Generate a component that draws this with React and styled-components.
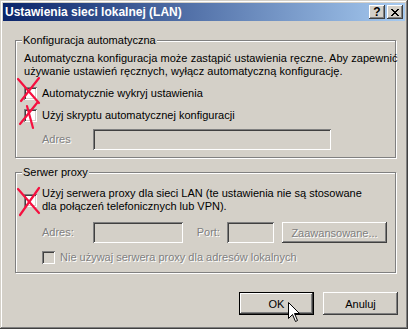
import React from 'react'
import styled, { createGlobalStyle } from 'styled-components'

const GlobalStyle = createGlobalStyle`
  html, body {
    margin: 0;
    padding: 0;
    background: #d4d0c8;
  }
  body {
    font-family: "Liberation Sans", Arial, sans-serif;
    font-size: 11px;
    color: #000;
  }
`

const raised = `
  box-shadow: inset -1px -1px #404040, inset 1px 1px #ffffff,
    inset -2px -2px #808080, inset 2px 2px #d4d0c8;
`

const sunken = `
  box-shadow: inset 1px 1px #808080, inset -1px -1px #ffffff,
    inset 2px 2px #404040, inset -2px -2px #d4d0c8;
`

const CLOSE_PIXELS = [
  'XX....XX',
  '.XX..XX.',
  '..XXXX..',
  '...XX...',
  '..XXXX..',
  '.XX..XX.',
  'XX....XX',
]

const CloseIcon = () => (
  <svg width="8" height="7" viewBox="0 0 8 7" shapeRendering="crispEdges">
    {CLOSE_PIXELS.map((row, y) =>
      row.split('').map((c, x) =>
        c === 'X' ? <rect key={`${x}-${y}`} x={x} y={y} width="1" height="1" fill="#000" /> : null
      )
    )}
  </svg>
)

const App = () => {
  return (
    <>
      <GlobalStyle />
      <Window>
        <TitleBar>
          <Title>Ustawienia sieci lokalnej (LAN)</Title>
          <CaptionButtons>
            <CaptionButton>?</CaptionButton>
            <CaptionButton><CloseIcon /></CaptionButton>
          </CaptionButtons>
        </TitleBar>

        <Body>
          <Group $height={124} $padTop={5}>
            <Legend>Konfiguracja automatyczna</Legend>
            <Paragraph>
              Automatyczna konfiguracja może zastąpić ustawienia ręczne. Aby zapewnić
              <br />
              używanie ustawień ręcznych, wyłącz automatyczną konfigurację.
            </Paragraph>
            <CheckRow $top={9}>
              <CheckBox />
              <Label>Automatycznie wykryj ustawienia</Label>
            </CheckRow>
            <CheckRow $top={9}>
              <CheckBox />
              <Label>Użyj skryptu automatycznej konfiguracji</Label>
            </CheckRow>
            <FieldRow $top={7}>
              <FieldLabel $width={51} $disabled>Adres</FieldLabel>
              <TextBox $width={238} />
            </FieldRow>
          </Group>

          <Group $height={107} $padTop={8} $top={8}>
            <Legend>Serwer proxy</Legend>
            <CheckRow>
              <CheckBox />
              <Label>
                Użyj serwera proxy dla sieci LAN (te ustawienia nie są stosowane
                <br />
                dla połączeń telefonicznych lub VPN).
              </Label>
            </CheckRow>
            <FieldRow $top={9}>
              <FieldLabel $width={51} $disabled>Adres:</FieldLabel>
              <TextBox $width={91} />
              <FieldLabel $width={31} $gap={14} $disabled>Port:</FieldLabel>
              <TextBox $width={47} />
              <PushButton $width={106} $height={21} $gap={8} disabled>
                Zaawansowane...
              </PushButton>
            </FieldRow>
            <CheckRow $top={8} $indent={18}>
              <CheckBox $disabled />
              <Label $disabled>Nie używaj serwera proxy dla adresów lokalnych</Label>
            </CheckRow>
          </Group>
        </Body>

        <Footer>
          <PushButton $default>OK</PushButton>
          <PushButton>Anuluj</PushButton>
        </Footer>

        <Marks width="408" height="329" viewBox="0 0 408 329">
          <g stroke="#f5103f" strokeWidth="2.2" strokeLinecap="round" fill="none">
            <path d="M18 79 L39 103" />
            <path d="M39 78 L21 101" />
            <path d="M37 103 L20 124" />
            <path d="M27 106 L33 128" />
            <path d="M18 189 L39 213" />
            <path d="M39 188 L20 215" />
          </g>
        </Marks>

        <Cursor width="13" height="21" viewBox="0 0 13 21">
          <path
            d="M0.5 0.5 V16.5 L4.5 12.5 L7.5 19.5 L9.5 18.5 L6.5 11.5 H11.5 Z"
            fill="#fff"
            stroke="#000"
            strokeWidth="1"
          />
        </Cursor>
      </Window>
    </>
  )
}

const Window = styled.div`
  position: relative;
  width: 408px;
  height: 329px;
  box-sizing: border-box;
  padding: 3px;
  background: #d4d0c8;
  box-shadow: inset -1px -1px #404040, inset 1px 1px #d4d0c8,
    inset -2px -2px #808080, inset 2px 2px #ffffff;
  display: flex;
  flex-direction: column;
  overflow: hidden;
`

const TitleBar = styled.div`
  height: 18px;
  display: flex;
  align-items: center;
  justify-content: space-between;
  padding: 0 2px;
  background: linear-gradient(to right, #0a246a, #a6caf0);
`

const Title = styled.span`
  color: #fff;
  font-weight: 700;
  font-size: 12px;
  line-height: 14px;
`

const CaptionButtons = styled.div`
  display: flex;
  gap: 2px;
`

const CaptionButton = styled.div`
  width: 16px;
  height: 14px;
  box-sizing: border-box;
  display: flex;
  align-items: center;
  justify-content: center;
  background: #d4d0c8;
  font-weight: 700;
  font-size: 12px;
  line-height: 14px;
  ${raised}
`

const Body = styled.div`
  padding: 13px 0 0 12px;
`

const Group = styled.fieldset`
  margin: ${p => p.$top || 0}px 0 0;
  padding: ${p => p.$padTop}px 8px 0;
  width: 381px;
  height: ${p => p.$height}px;
  box-sizing: border-box;
  border: 1px solid #808080;
  box-shadow: inset 1px 1px #fff, 1px 1px #fff;
  min-inline-size: 0;
`

const Legend = styled.legend`
  margin-left: -2px;
  padding: 0 1px;
  line-height: 13px;
  background: #d4d0c8;
`

const Paragraph = styled.p`
  margin: 0;
  line-height: 13px;
  white-space: nowrap;
  letter-spacing: 0.05px;
`

const CheckRow = styled.div`
  display: flex;
  align-items: center;
  gap: 5px;
  margin-top: ${p => p.$top || 0}px;
  padding-left: ${p => p.$indent || 0}px;
`

const CheckBox = styled.span`
  flex: none;
  width: 13px;
  height: 13px;
  box-sizing: border-box;
  background: ${p => (p.$disabled ? '#d4d0c8' : '#fff')};
  ${sunken}
`

const Label = styled.span`
  line-height: 13px;
  white-space: nowrap;
  color: ${p => (p.$disabled ? '#808080' : '#000')};
  text-shadow: ${p => (p.$disabled ? '1px 1px 0 #fff' : 'none')};
`

const FieldRow = styled.div`
  display: flex;
  align-items: center;
  margin-top: ${p => p.$top || 0}px;
  padding-left: 18px;
`

const FieldLabel = styled(Label)`
  width: ${p => p.$width}px;
  margin-left: ${p => p.$gap || 0}px;
`

const TextBox = styled.div`
  width: ${p => p.$width}px;
  height: 21px;
  box-sizing: border-box;
  background: #d4d0c8;
  ${sunken}
`

const PushButton = styled.button`
  width: ${p => p.$width || 75}px;
  height: ${p => p.$height || 23}px;
  margin-left: ${p => p.$gap || 0}px;
  box-sizing: border-box;
  padding: 0;
  font-family: inherit;
  font-size: 11px;
  color: #000;
  background: #d4d0c8;
  border: ${p => (p.$default ? '1px solid #000' : 'none')};
  ${raised}

  &:disabled {
    color: #808080;
    text-shadow: 1px 1px 0 #fff;
  }
`

const Footer = styled.div`
  display: flex;
  justify-content: flex-end;
  gap: 9px;
  margin-top: 19px;
  padding-right: 7px;
`

const Marks = styled.svg`
  position: absolute;
  left: 0;
  top: 0;
  pointer-events: none;
`

const Cursor = styled.svg`
  position: absolute;
  left: 288px;
  top: 302px;
  pointer-events: none;
`

export default App
